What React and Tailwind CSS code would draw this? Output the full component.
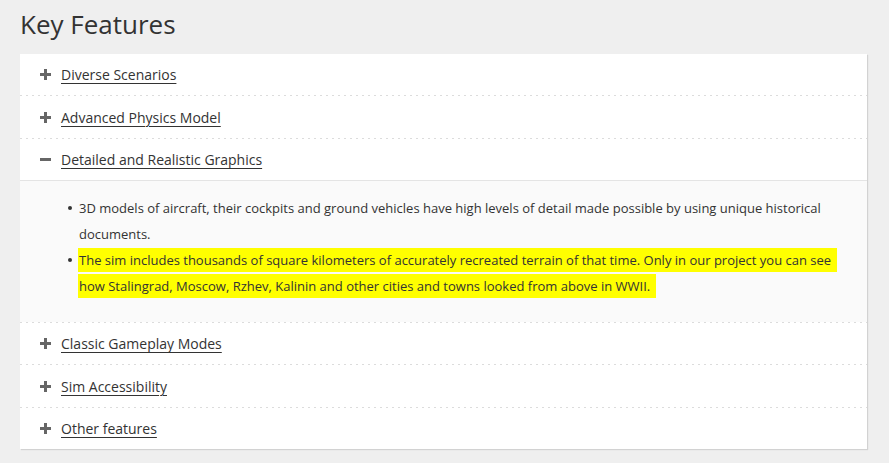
import React from "react";

const Dashed = () => (
  <div className="h-px w-full bg-[repeating-linear-gradient(to_right,#dcdcdc_0_2px,transparent_2px_6px)]" />
);

const Plus = () => (
  <svg width="11" height="11" viewBox="0 0 11 11" className="shrink-0">
    <rect x="4" y="0" width="3" height="11" fill="#666" />
    <rect x="0" y="4" width="11" height="3" fill="#666" />
  </svg>
);

const Minus = () => (
  <svg width="11" height="11" viewBox="0 0 11 11" className="shrink-0">
    <rect x="0" y="4" width="11" height="3" fill="#666" />
  </svg>
);

const Row = ({ title, open, tall }) => (
  <div className={`flex items-center gap-[10px] pl-[20px] ${tall ? "h-[42px]" : "h-[41px]"}`}>
    {open ? <Minus /> : <Plus />}
    <a href="#" className="text-[14px] text-[#333] underline decoration-1 underline-offset-[3px]">
      {title}
    </a>
  </div>
);

export default function App() {
  return (
    <div className="min-h-[463px] w-full bg-[#efefef] px-[20px] pt-[6px] font-['Open_Sans',sans-serif] text-[#333]">
      <h2 className="m-0 h-[48px] text-[26px] leading-[36px] font-normal">Key Features</h2>
      <div className="w-[847px] bg-white shadow-[1px_1px_1px_rgba(0,0,0,0.12)]">
        <Row title="Diverse Scenarios" />
        <Dashed />
        <Row title="Advanced Physics Model" tall />
        <Dashed />
        <Row title="Detailed and Realistic Graphics" open />
        <div className="h-px w-full bg-[#e4e4e4]" />
        <div className="bg-[#fafafa] pt-[14px] pb-[23px] pl-[39px] pr-[24px] text-[13px] leading-[26px]">
          <ul className="m-0 flex list-none flex-col p-0">
            <li className="relative pl-[20px]">
              <span className="absolute left-[9px] top-[11px] h-[4px] w-[4px] rounded-full bg-[#333]" />
              3D models of aircraft, their cockpits and ground vehicles have high levels of detail made possible by using unique historical documents.
            </li>
            <li className="relative pl-[20px]">
              <span className="absolute left-[9px] top-[11px] h-[4px] w-[4px] rounded-full bg-[#333]" />
              <span className="-ml-[1px] bg-[#ffff00] py-[3px] pr-[6px] pl-[1px] [box-decoration-break:clone]">
                The sim includes thousands of square kilometers of accurately recreated terrain of that time. Only in our project you can see how Stalingrad, Moscow, Rzhev, Kalinin and other cities and towns looked from above in WWII.
              </span>
            </li>
          </ul>
        </div>
        <Dashed />
        <Row title="Classic Gameplay Modes" />
        <Dashed />
        <Row title="Sim Accessibility" tall />
        <Dashed />
        <Row title="Other features" />
      </div>
    </div>
  );
}
